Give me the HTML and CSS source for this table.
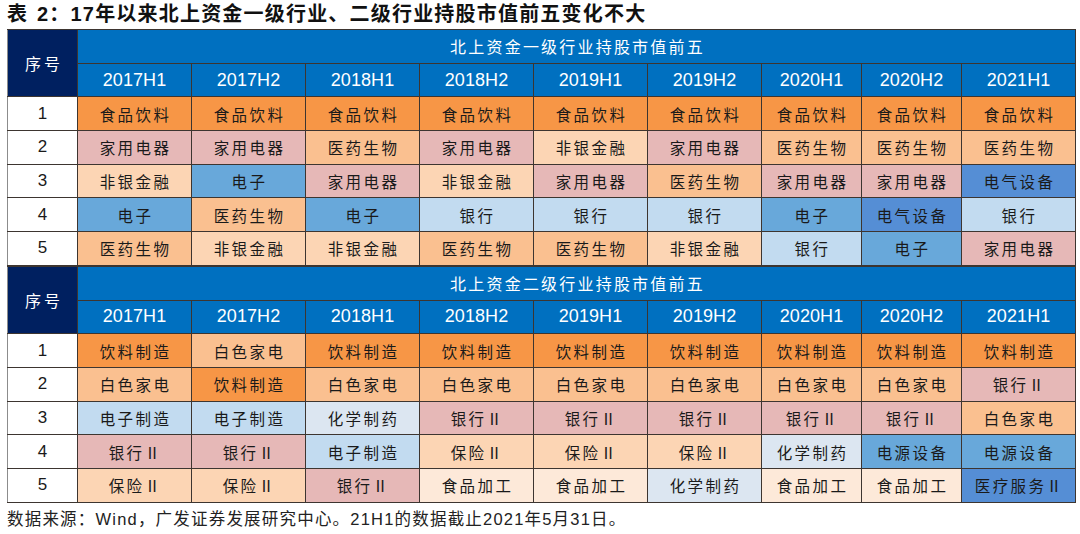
FILE: index.html
```html
<!DOCTYPE html>
<html lang="zh-CN">
<head>
<meta charset="utf-8">
<title>北上资金持股</title>
<link rel="stylesheet" href="styles.css">
</head>
<body>
<div class="page">
  <h1 class="title"><span class="t-cjk">表</span> 2：17年以来北上资金一级行业、二级行业持股市值前五变化不大</h1>

  <table class="grid">
    <colgroup>
      <col class="c-idx"><col class="c-w"><col class="c-w"><col class="c-w"><col class="c-w"><col class="c-w"><col class="c-w"><col class="c-n"><col class="c-n"><col class="c-l">
    </colgroup>
    <thead>
      <tr><th rowspan="2" class="idx-head">序号</th><th colspan="9" class="group-head">北上资金一级行业持股市值前五</th></tr>
      <tr class="years"><th>2017H1</th><th>2017H2</th><th>2018H1</th><th>2018H2</th><th>2019H1</th><th>2019H2</th><th>2020H1</th><th>2020H2</th><th>2021H1</th></tr>
    </thead>
    <tbody>
      <tr><td class="idx">1</td><td class="o1">食品饮料</td><td class="o1">食品饮料</td><td class="o1">食品饮料</td><td class="o1">食品饮料</td><td class="o1">食品饮料</td><td class="o1">食品饮料</td><td class="o1">食品饮料</td><td class="o1">食品饮料</td><td class="o1">食品饮料</td></tr>
      <tr><td class="idx">2</td><td class="pk">家用电器</td><td class="pk">家用电器</td><td class="o2">医药生物</td><td class="pk">家用电器</td><td class="o3">非银金融</td><td class="pk">家用电器</td><td class="o2">医药生物</td><td class="o2">医药生物</td><td class="o2">医药生物</td></tr>
      <tr><td class="idx">3</td><td class="o3">非银金融</td><td class="b1">电子</td><td class="pk">家用电器</td><td class="o3">非银金融</td><td class="pk">家用电器</td><td class="o2">医药生物</td><td class="pk">家用电器</td><td class="pk">家用电器</td><td class="b2">电气设备</td></tr>
      <tr><td class="idx">4</td><td class="b1">电子</td><td class="o2">医药生物</td><td class="b1">电子</td><td class="b3">银行</td><td class="b3">银行</td><td class="b3">银行</td><td class="b1">电子</td><td class="b2">电气设备</td><td class="b3">银行</td></tr>
      <tr><td class="idx">5</td><td class="o2">医药生物</td><td class="o3">非银金融</td><td class="o3">非银金融</td><td class="o2">医药生物</td><td class="o2">医药生物</td><td class="o3">非银金融</td><td class="b3">银行</td><td class="b1">电子</td><td class="pk">家用电器</td></tr>
    </tbody>
  </table>

  <table class="grid">
    <colgroup>
      <col class="c-idx"><col class="c-w"><col class="c-w"><col class="c-w"><col class="c-w"><col class="c-w"><col class="c-w"><col class="c-n"><col class="c-n"><col class="c-l">
    </colgroup>
    <thead>
      <tr><th rowspan="2" class="idx-head">序号</th><th colspan="9" class="group-head">北上资金二级行业持股市值前五</th></tr>
      <tr class="years"><th>2017H1</th><th>2017H2</th><th>2018H1</th><th>2018H2</th><th>2019H1</th><th>2019H2</th><th>2020H1</th><th>2020H2</th><th>2021H1</th></tr>
    </thead>
    <tbody>
      <tr><td class="idx">1</td><td class="o1">饮料制造</td><td class="o2">白色家电</td><td class="o1">饮料制造</td><td class="o1">饮料制造</td><td class="o1">饮料制造</td><td class="o1">饮料制造</td><td class="o1">饮料制造</td><td class="o1">饮料制造</td><td class="o1">饮料制造</td></tr>
      <tr><td class="idx">2</td><td class="o2">白色家电</td><td class="o1">饮料制造</td><td class="o2">白色家电</td><td class="o2">白色家电</td><td class="o2">白色家电</td><td class="o2">白色家电</td><td class="o2">白色家电</td><td class="o2">白色家电</td><td class="pk">银行Ⅱ</td></tr>
      <tr><td class="idx">3</td><td class="b3">电子制造</td><td class="b3">电子制造</td><td class="b4">化学制药</td><td class="pk">银行Ⅱ</td><td class="pk">银行Ⅱ</td><td class="pk">银行Ⅱ</td><td class="pk">银行Ⅱ</td><td class="pk">银行Ⅱ</td><td class="o2">白色家电</td></tr>
      <tr><td class="idx">4</td><td class="pk">银行Ⅱ</td><td class="pk">银行Ⅱ</td><td class="b3">电子制造</td><td class="o3">保险Ⅱ</td><td class="o3">保险Ⅱ</td><td class="o3">保险Ⅱ</td><td class="b4">化学制药</td><td class="b1">电源设备</td><td class="b1">电源设备</td></tr>
      <tr><td class="idx">5</td><td class="o3">保险Ⅱ</td><td class="o3">保险Ⅱ</td><td class="pk">银行Ⅱ</td><td class="o4">食品加工</td><td class="o4">食品加工</td><td class="b4">化学制药</td><td class="o4">食品加工</td><td class="o4">食品加工</td><td class="b2">医疗服务Ⅱ</td></tr>
    </tbody>
  </table>

  <p class="note">数据来源：Wind，广发证券发展研究中心。21H1的数据截止2021年5月31日。</p>
</div>
</body>
</html>
```
FILE: styles.css
```css
html, body {
  margin: 0;
  padding: 0;
  background: #ffffff;
}

.page {
  width: 1080px;
  padding: 0 0 0 7px;
  box-sizing: border-box;
  font-family: "Liberation Sans", "Noto Sans CJK SC", sans-serif;
  color: #111;
}

.title {
  margin: 0;
  height: 29px;
  line-height: 28px;
  font-size: 20px;
  font-weight: 700;
  letter-spacing: 1.2px;
  white-space: nowrap;
  color: #111;
}

.t-cjk {
  margin-right: 2px;
}

.grid {
  border-collapse: collapse;
  table-layout: fixed;
  width: 1068px;
}

.c-idx { width: 70px; }
.c-w { width: 114px; }
.c-n { width: 100px; }
.c-l { width: 114px; }

.grid th,
.grid td {
  height: 33.7px;
  padding: 0;
  border: 1px solid #3d3530;
  text-align: center;
  vertical-align: middle;
  white-space: nowrap;
  box-sizing: border-box;
}

.grid thead th {
  color: #ffffff;
  font-weight: 400;
  background: #0070c0;
}

.idx-head {
  background: #002060 !important;
  font-size: 16px;
  letter-spacing: 3px;
  padding-left: 3px !important;
  border-left-color: #8c8c8c !important;
}

.group-head {
  font-size: 16px;
  letter-spacing: 2.2px;
  padding-left: 2px !important;
}

.years th {
  font-size: 18px;
  letter-spacing: 0.1px;
}

.grid td {
  font-family: "Noto Sans CJK SC", sans-serif;
  font-size: 15.5px;
  letter-spacing: 2.4px;
  padding-left: 2px;
  color: #1a1a1a;
}

.grid td.idx {
  font-family: "Liberation Sans", sans-serif;
  font-size: 17px;
  letter-spacing: 0;
  padding-left: 0;
  background: #ffffff;
  border-left-color: #8c8c8c;
}

.o1 { background: #f79646; }
.o2 { background: #fac090; }
.o3 { background: #fcd5b4; }
.o4 { background: #fde9d9; }
.pk { background: #e6b8b7; }
.b1 { background: #68a8da; }
.b2 { background: #558ed5; }
.b3 { background: #c2dbf0; }
.b4 { background: #dce6f1; }

.note {
  margin: 0;
  padding-top: 2px;
  line-height: 28px;
  font-size: 16.5px;
  letter-spacing: 1.2px;
  color: #222;
  white-space: nowrap;
}
```
